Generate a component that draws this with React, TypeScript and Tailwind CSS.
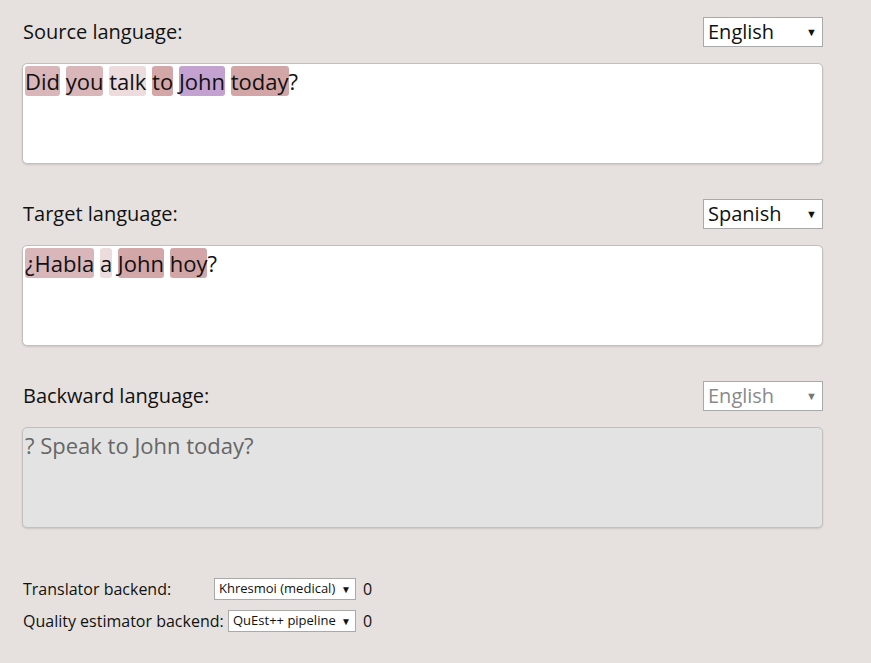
import React from "react";

const font = { fontFamily: '"Open Sans", sans-serif' };

function Select({ value, disabled }: { value: string; disabled?: boolean }) {
  return (
    <div
      className={`flex h-[30px] w-[120px] items-center justify-between border border-[#a9a9a9] bg-white pl-[4px] pr-[5px] text-[20px] ${
        disabled ? "text-[#8a8a8a]" : "text-[#111]"
      }`}
    >
      <span>{value}</span>
      <span className={`text-[11px] ${disabled ? "text-[#777]" : "text-[#111]"}`}>▼</span>
    </div>
  );
}

function SmallSelect({ value, width }: { value: string; width: string }) {
  return (
    <div
      className={`flex h-[22px] ${width} items-center justify-between border border-[#a9a9a9] bg-white pl-[4px] pr-[4px] text-[13px] text-[#111]`}
    >
      <span>{value}</span>
      <span className="text-[10px]">▼</span>
    </div>
  );
}

type W = { t: string; c?: string };

function Words({ words }: { words: W[] }) {
  return (
    <>
      {words.map((w, i) =>
        w.c ? (
          <span key={i} className="rounded-[3px]" style={{ backgroundColor: w.c }}>
            {w.t}
          </span>
        ) : (
          <span key={i}>{w.t}</span>
        )
      )}
    </>
  );
}

function Section({
  label,
  value,
  disabled,
  children,
}: {
  label: string;
  value: string;
  disabled?: boolean;
  children: React.ReactNode;
}) {
  return (
    <div className="flex flex-col">
      <div className="flex items-center justify-between">
        <span className="ml-[1px] text-[20px] text-[#111]">{label}</span>
        <Select value={value} disabled={disabled} />
      </div>
      <div
        className={`mt-[16px] h-[101px] rounded-[5px] border border-[#c4bfbc] px-[2px] py-[2px] text-[22px] leading-[normal] shadow-[0_1px_2px_rgba(0,0,0,0.12)] ${
          disabled ? "bg-[#e3e3e3] text-[#666]" : "bg-white text-[#111]"
        }`}
      >
        {children}
      </div>
    </div>
  );
}

export default function App() {
  const src: W[] = [
    { t: "Did", c: "#d9b6b9" },
    { t: " " },
    { t: "you", c: "#d9b6b9" },
    { t: " " },
    { t: "talk", c: "#eddcdd" },
    { t: " " },
    { t: "to", c: "#d3a6a8" },
    { t: " " },
    { t: "John", c: "#c3a2d1" },
    { t: " " },
    { t: "today", c: "#d2a6a7" },
    { t: "?" },
  ];
  const tgt: W[] = [
    { t: "¿Habla", c: "#d9b6b9" },
    { t: " " },
    { t: "a", c: "#eddcdd" },
    { t: " " },
    { t: "John", c: "#d3a6a8" },
    { t: " " },
    { t: "hoy", c: "#d2a6a7" },
    { t: "?" },
  ];
  return (
    <div className="min-h-[663px] w-full bg-[#e6e1de]" style={font}>
      <div className="ml-[22px] flex w-[801px] flex-col gap-[35px] pt-[17px]">
        <Section label="Source language:" value="English">
          <Words words={src} />
        </Section>
        <Section label="Target language:" value="Spanish">
          <Words words={tgt} />
        </Section>
        <Section label="Backward language:" value="English" disabled>
          ? Speak to John today?
        </Section>
      </div>
      <div className="ml-[23px] mt-[49px] flex flex-col gap-[8px] text-[16px] text-[#111]">
        <div className="flex items-center">
          <span className="w-[191px]">Translator backend:</span>
          <SmallSelect value="Khresmoi (medical)" width="w-[142px]" />
          <span className="ml-[7px]">0</span>
        </div>
        <div className="flex items-center">
          <span className="w-[205px]">Quality estimator backend:</span>
          <SmallSelect value="QuEst++ pipeline" width="w-[128px]" />
          <span className="ml-[7px]">0</span>
        </div>
      </div>
    </div>
  );
}
